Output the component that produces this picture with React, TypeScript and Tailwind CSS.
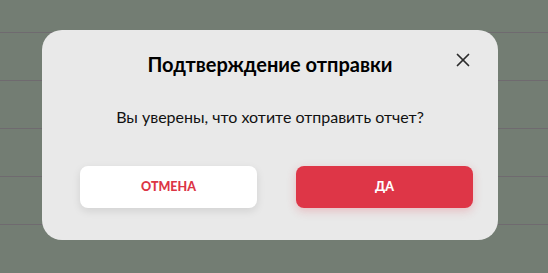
import { X } from 'lucide-react';

export default function App() {
  const rows = [0, 1, 2, 3, 4];

  return (
    <div
      className="relative h-[273px] w-full overflow-hidden bg-[#737d73]"
      style={{ fontFamily: 'Lato, "Noto Sans", sans-serif' }}
    >
      {/* Rows of the page behind the overlay */}
      <div className="pt-[32px]">
        {rows.map((r) => (
          <div key={r} className="h-[48px] border-t border-[#6f6a6f]" />
        ))}
      </div>

      {/* Modal */}
      <div className="absolute inset-0 flex items-center justify-center pr-[8px] pb-[3px]">
        <div className="relative h-[210px] w-[456px] rounded-[20px] bg-[#e9e9e9]">
          <button className="absolute right-[24px] top-[19px] text-[#2b2b2b]">
            <X size={22} strokeWidth={1.9} />
          </button>

          <h2 className="pt-[21px] text-center text-[20px] font-bold leading-[26px] text-black">
            Подтверждение отправки
          </h2>

          <p className="mt-[30px] text-center text-[16px] leading-[20px] text-[#111]">
            Вы уверены, что хотите отправить отчет?
          </p>

          <div className="mt-[39px] flex gap-[39px] pl-[38px] pr-[25px]">
            <button className="h-[42px] flex-1 rounded-[8px] bg-white text-[12.5px] font-black text-[#dc3545] shadow-[0_3px_8px_rgba(0,0,0,0.1)]">
              ОТМЕНА
            </button>
            <button className="h-[42px] flex-1 rounded-[8px] bg-[#de3647] text-[12.5px] font-black text-white shadow-[0_3px_10px_rgba(222,54,71,0.25)]">
              ДА
            </button>
          </div>
        </div>
      </div>
    </div>
  );
}
